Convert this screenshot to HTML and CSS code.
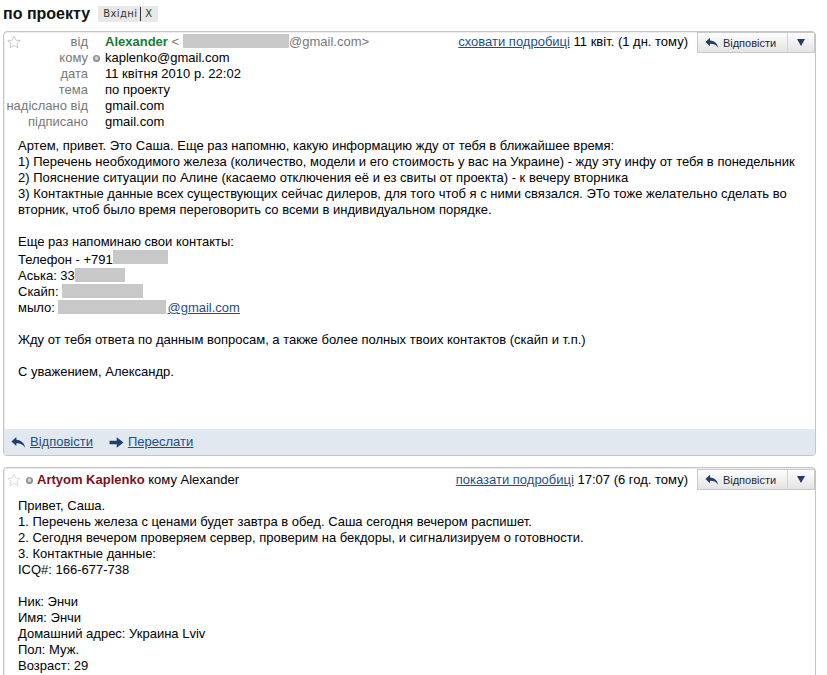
FILE: index.html
```html
<!DOCTYPE html>
<html lang="uk">
<head>
<meta charset="utf-8">
<title>по проекту</title>
<link rel="stylesheet" href="styles.css">
</head>
<body>
<div class="page">
  <div class="title-row">
    <h1 class="subject">по проекту</h1>
    <span class="label"><span class="label-name">Вхідні</span><span class="label-x">X</span></span>
  </div>

  <div class="card">
    <div class="card-head">
      <div class="meta">
        <svg class="star" viewBox="0 0 14 14" width="14" height="14"><polygon points="7,1 8.8,5.2 13.3,5.5 9.9,8.4 11,12.9 7,10.5 3,12.9 4.1,8.4 0.7,5.5 5.2,5.2" fill="#fff" stroke="#c8c8c8" stroke-width="1"/></svg>
        <span class="k k1">від</span><span class="ico"></span><span class="v"><b class="sender sender-green">Alexander</b> <span class="addr">&lt;<span class="redact r-from"></span>@gmail.com&gt;</span></span>
        <span class="k">кому</span><span class="ico"><span class="dot"></span></span><span class="v">kaplenko@gmail.com</span>
        <span class="k">дата</span><span class="ico"></span><span class="v">11 квітня 2010 р. 22:02</span>
        <span class="k">тема</span><span class="ico"></span><span class="v">по проекту</span>
        <span class="k">надіслано від</span><span class="ico"></span><span class="v">gmail.com</span>
        <span class="k">підписано</span><span class="ico"></span><span class="v">gmail.com</span>
      </div>
      <div class="actions">
        <span class="when"><a class="link" href="#">сховати подробиці</a> 11 квіт. (1 дн. тому)</span>
        <div class="btn-group">
          <button class="reply-btn" type="button"><svg viewBox="0 0 14 12" width="14" height="12"><path d="M5 0.8 L0.4 5 L5 9.2 V6.7 C8.6 6.7 11 7.6 13.2 10.8 C12.5 6.6 9.6 3.7 5 3.4 Z" fill="#1f3d6d"/></svg>Відповісти</button>
          <button class="more-btn" type="button"><svg viewBox="0 0 8 7" width="8" height="7"><polygon points="0,0 8,0 4,7" fill="#1f3d6d"/></svg></button>
        </div>
      </div>
    </div>
    <div class="card-body">
      <p>Артем, привет. Это Саша. Еще раз напомню, какую информацию жду от тебя в ближайшее время:<br>
      1) Перечень необходимого железа (количество, модели и его стоимость у вас на Украине) - жду эту инфу от тебя в понедельник<br>
      2) Пояснение ситуации по Алине (касаемо отключения её и ез свиты от проекта) - к вечеру вторника<br>
      3) Контактные данные всех существующих сейчас дилеров, для того чтоб я с ними связался. ЭТо тоже желательно сделать во вторник, чтоб было время переговорить со всеми в индивидуальном порядке.</p>
      <p>Еще раз напоминаю свои контакты:<br>
      Телефон - +791<span class="redact r-tel"></span><br>
      Аська: 33<span class="redact r-icq"></span><br>
      Скайп: <span class="redact r-skype"></span><br>
      мыло: <span class="redact r-mail"></span><a class="link" href="#">@gmail.com</a></p>
      <p>Жду от тебя ответа по данным вопросам, а также более полных твоих контактов (скайп и т.п.)</p>
      <p>С уважением, Александр.</p>
    </div>
    <div class="card-foot">
      <a class="foot-link" href="#"><svg viewBox="0 0 14 12" width="15" height="13"><path d="M5 0.8 L0.4 5 L5 9.2 V6.7 C8.6 6.7 11 7.6 13.2 10.8 C12.5 6.6 9.6 3.7 5 3.4 Z" fill="#1f3d6d"/></svg><span>Відповісти</span></a>
      <a class="foot-link" href="#"><svg viewBox="0 0 14 12" width="15" height="13"><path d="M0.5 4.3 H7.2 V1 L13.5 6 L7.2 11 V7.7 H0.5 Z" fill="#1f3d6d"/></svg><span>Переслати</span></a>
    </div>
  </div>

  <div class="card card-open">
    <div class="card-head head-compact">
      <div class="who">
        <svg class="star star-light" viewBox="0 0 14 14" width="14" height="14"><polygon points="7,1 8.8,5.2 13.3,5.5 9.9,8.4 11,12.9 7,10.5 3,12.9 4.1,8.4 0.7,5.5 5.2,5.2" fill="#fff" stroke="#dcdcdc" stroke-width="1"/></svg>
        <span class="dot"></span>
        <b class="sender sender-red">Artyom Kaplenko</b>&nbsp;кому Alexander
      </div>
      <div class="actions">
        <span class="when"><a class="link" href="#">показати подробиці</a> 17:07 (6 год. тому)</span>
        <div class="btn-group">
          <button class="reply-btn" type="button"><svg viewBox="0 0 14 12" width="14" height="12"><path d="M5 0.8 L0.4 5 L5 9.2 V6.7 C8.6 6.7 11 7.6 13.2 10.8 C12.5 6.6 9.6 3.7 5 3.4 Z" fill="#1f3d6d"/></svg>Відповісти</button>
          <button class="more-btn" type="button"><svg viewBox="0 0 8 7" width="8" height="7"><polygon points="0,0 8,0 4,7" fill="#1f3d6d"/></svg></button>
        </div>
      </div>
    </div>
    <div class="card-body">
      <p>Привет, Саша.<br>
      1. Перечень железа с ценами будет завтра в обед. Саша сегодня вечером распишет.<br>
      2. Сегодня вечером проверяем сервер, проверим на бекдоры, и сигнализируем о готовности.<br>
      3. Контактные данные:<br>
      ICQ#: 166-677-738</p>
      <p>Ник: Энчи<br>
      Имя: Энчи<br>
      Домашний адрес: Украина Lviv<br>
      Пол: Муж.<br>
      Возраст: 29</p>
    </div>
  </div>
</div>
</body>
</html>
```

FILE: styles.css
```css
* { box-sizing: border-box; }

html, body {
  margin: 0;
  padding: 0;
  background: #fff;
}

body {
  font-family: "Liberation Sans", Arial, sans-serif;
  font-size: 13px;
  line-height: 16px;
  color: #000;
  overflow: hidden;
}

.page {
  padding: 0 11px 0 3px;
}

/* title */
.title-row {
  display: flex;
  align-items: center;
  gap: 8px;
  height: 27px;
  margin-bottom: 4px;
}

.subject {
  margin: 0;
  font-size: 16px;
  line-height: 20px;
  font-weight: bold;
  color: #111;
}

.label {
  display: flex;
  align-items: center;
  height: 16px;
  padding: 0 5px;
  background: #e8e8e8;
  color: #333;
  font-family: "DejaVu Sans", Verdana, sans-serif;
  font-size: 10px;
  line-height: 14px;
  letter-spacing: 0.4px;
}

.label-name {
  padding-right: 3px;
  border-right: 1px solid #333;
}

.label-x {
  padding-left: 4px;
}

/* card */
.card {
  border: 1px solid #c4c4c4;
  border-radius: 4px;
  margin-bottom: 11px;
  box-shadow: inset 1px 1px 0 #eeeeee;
  overflow: hidden;
}

.card-head {
  display: flex;
  align-items: flex-start;
  padding-top: 2px;
}

.meta {
  flex: 1;
  display: grid;
  grid-template-columns: 84px 17px 1fr;
  grid-auto-rows: 16px;
}

.star {
  grid-row: 1;
  grid-column: 1;
  justify-self: start;
  align-self: center;
  margin-left: 3px;
  display: block;
}

.k {
  grid-column: 1;
  text-align: right;
  color: #777;
  white-space: nowrap;
}

.k1 { grid-row: 1; }

.ico {
  display: flex;
  align-items: center;
  justify-content: center;
}

.v {
  white-space: nowrap;
}

.dot {
  display: inline-block;
  width: 7px;
  height: 7px;
  border-radius: 50%;
  background: radial-gradient(circle at 50% 45%, #d8d8d8 0 1.5px, #9a9a9a 2px, #8a8a8a 3.5px);
}

.sender { font-weight: bold; }
.sender-green { color: #1a7a33; }
.sender-red { color: #7b1120; }

.addr { color: #777; }

.redact {
  display: inline-block;
  height: 14px;
  background: #c8c8c8;
  vertical-align: -2px;
}

.r-from { width: 106px; margin-left: 4px; }
.r-tel { width: 55px; vertical-align: 0; }
.r-icq { width: 50px; }
.r-skype { width: 81px; }
.r-mail { width: 108px; margin-right: 1px; }

.actions {
  display: flex;
  align-items: flex-start;
  gap: 9px;
}

.when {
  white-space: nowrap;
}

.link {
  color: #1f4f84;
  text-decoration: underline;
}

.btn-group {
  display: flex;
  margin-top: -2px;
  height: 21px;
}

.reply-btn,
.more-btn {
  font-family: "Liberation Sans", Arial, sans-serif;
  font-size: 11px;
  color: #1b2a44;
  border: 1px solid #c9c9c9;
  background: linear-gradient(#fdfdfd, #e4e4e4);
  margin: 0;
  padding: 0;
  display: flex;
  align-items: center;
}

.reply-btn {
  width: 90px;
  justify-content: center;
  gap: 4px;
  border-right: 0;
  padding-right: 4px;
}

.more-btn {
  width: 28px;
  justify-content: center;
  border-left: 1px solid #d4d4d4;
}

.card-body {
  padding: 8px 10px 49px 14px;
}

.card-body p {
  margin: 0 0 16px 0;
}

.card-body p:last-child {
  margin-bottom: 0;
}

.card-foot {
  display: flex;
  align-items: center;
  gap: 16px;
  height: 26px;
  padding-left: 7px;
  background: #e1e8f0;
}

.foot-link {
  display: flex;
  align-items: center;
  gap: 4px;
  color: #1f4f84;
}

.foot-link span {
  text-decoration: underline;
}

/* second message */
.head-compact {
  padding-top: 4px;
}

.who {
  flex: 1;
  display: flex;
  align-items: center;
  height: 16px;
  white-space: nowrap;
}

.who .star {
  margin-left: 3px;
  margin-right: 5px;
}

.who .dot {
  margin-right: 4px;
}

.head-compact .btn-group {
  margin-top: -3px;
}

.card-open .card-body {
  padding-bottom: 40px;
}
```
